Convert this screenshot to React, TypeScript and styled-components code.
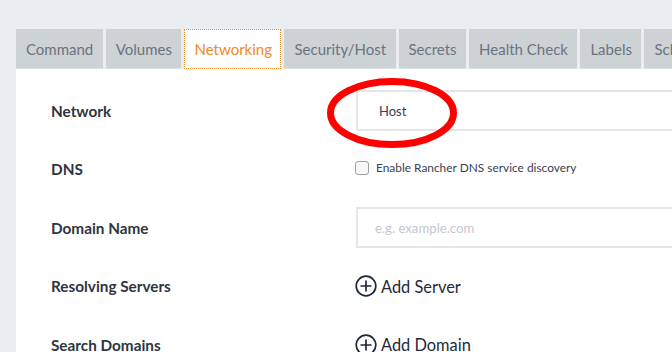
import styled, { createGlobalStyle } from "styled-components";

const Global = createGlobalStyle`
  html, body {
    margin: 0;
    padding: 0;
    background: #ebeef0;
    font-family: Lato, "Liberation Sans", sans-serif;
    overflow: hidden;
  }
`;

const Page = styled.div`
  position: relative;
  width: 672px;
  height: 352px;
  overflow: hidden;
  padding: 29px 0 0 16px;
  box-sizing: border-box;
  display: flex;
  flex-direction: column;
`;

const TabBar = styled.div`
  display: flex;
  gap: 3px;
  height: 40px;
  flex-shrink: 0;
  white-space: nowrap;
`;

const Tab = styled.div<{ $active?: boolean }>`
  display: flex;
  align-items: center;
  padding: 0 9.5px 0 10px;
  font-size: 15px;
  color: ${(p) => (p.$active ? "#f08a24" : "#6b7480")};
  background: ${(p) => (p.$active ? "#ffffff" : "#cdd2d5")};
  border-bottom: 1px solid ${(p) => (p.$active ? "#ffffff" : "#dde1e3")};
  outline: ${(p) => (p.$active ? "1px dotted #f08a24" : "none")};
  outline-offset: -1px;
  flex-shrink: 0;
`;

const Panel = styled.div`
  flex: 1;
  background: #ffffff;
  padding: 21px 0 0 35px;
`;

const Form = styled.div`
  display: grid;
  grid-template-columns: 305px 400px;
  grid-auto-rows: 41px;
  row-gap: 17.5px;
  align-items: center;
`;

const Label = styled.div`
  font-size: 15.3px;
  font-weight: 700;
  color: #2f3541;
`;

const Field = styled.div<{ $placeholder?: boolean }>`
  height: 41px;
  box-sizing: border-box;
  border: 2px solid #e3e7e8;
  border-right: none;
  padding-left: ${(p) => (p.$placeholder ? "17px" : "21px")};
  display: flex;
  align-items: center;
  font-size: ${(p) => (p.$placeholder ? "13.2px" : "13px")};
  color: ${(p) => (p.$placeholder ? "#c3c8cf" : "#3b4150")};
`;

const CheckRow = styled.label`
  display: flex;
  align-items: center;
  gap: 7px;
  font-size: 11.9px;
  color: #3b4150;
  margin-top: -3px;
`;

const Box = styled.span`
  width: 12px;
  height: 12px;
  border: 1px solid #9aa0a6;
  border-radius: 3px;
  background: #f7f7f7;
  margin-left: -1px;
`;

const AddLink = styled.div`
  display: flex;
  align-items: center;
  gap: 4px;
  font-size: 16.4px;
  color: #1f2937;
  margin-left: -1px;
`;

const Mark = styled.svg`
  position: absolute;
  left: 320px;
  top: 72px;
  pointer-events: none;
`;

const PlusCircle = () => (
  <svg width="22" height="22" viewBox="0 0 22 22">
    <circle cx="11" cy="11" r="9.8" fill="none" stroke="#1f2937" strokeWidth="1.7" />
    <path d="M11 5.5v11M5.5 11h11" stroke="#1f2937" strokeWidth="1.7" />
  </svg>
);

const tabs = ["Command", "Volumes", "Networking", "Security/Host", "Secrets", "Health Check", "Labels", "Scheduling"];

function App() {
  return (
    <>
      <Global />
      <Page>
        <TabBar>
          {tabs.map((t) => (
            <Tab key={t} $active={t === "Networking"}>
              {t}
            </Tab>
          ))}
        </TabBar>
        <Panel>
          <Form>
            <Label>Network</Label>
            <Field>Host</Field>
            <Label>DNS</Label>
            <CheckRow>
              <Box />
              Enable Rancher DNS service discovery
            </CheckRow>
            <Label>Domain Name</Label>
            <Field $placeholder>e.g. example.com</Field>
            <Label>Resolving Servers</Label>
            <AddLink>
              <PlusCircle />
              Add Server
            </AddLink>
            <Label>Search Domains</Label>
            <AddLink>
              <PlusCircle />
              Add Domain
            </AddLink>
          </Form>
        </Panel>
        <Mark width="150" height="82" viewBox="0 0 150 82">
          <ellipse cx="72" cy="41" rx="61.5" ry="31.5" fill="none" stroke="#ff0000" strokeWidth="7" />
        </Mark>
      </Page>
    </>
  );
}

export default App;
